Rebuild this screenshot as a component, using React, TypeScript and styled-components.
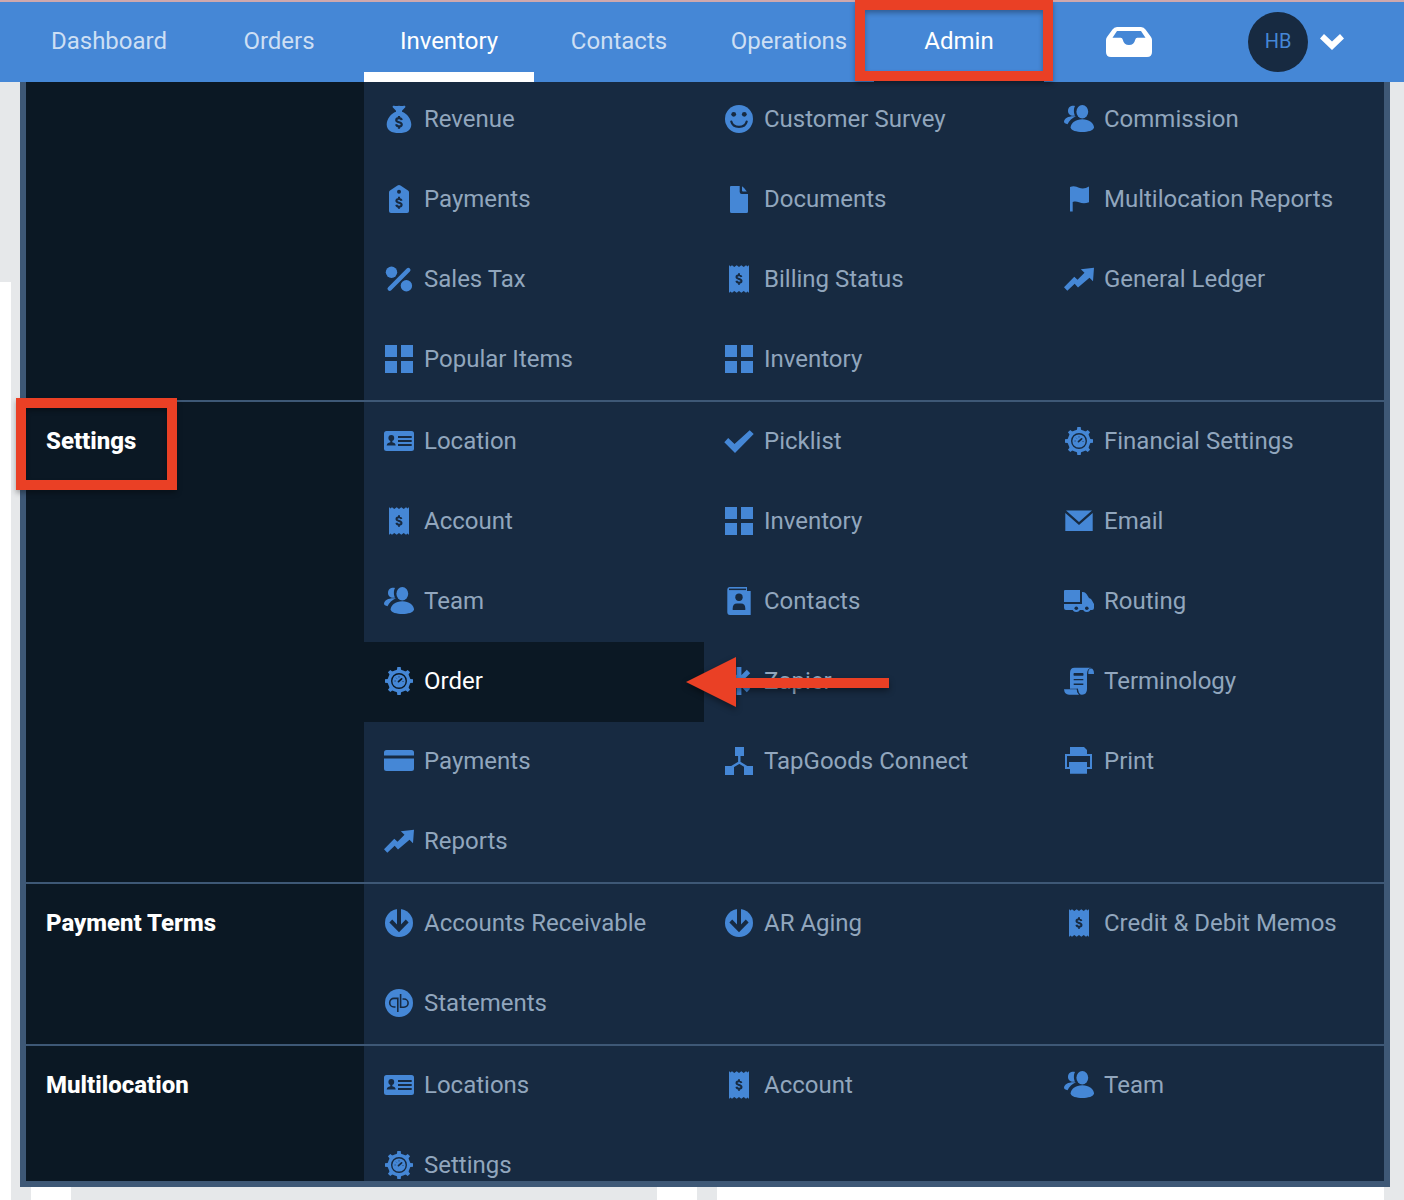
import React from "react";
import styled, { createGlobalStyle, css } from "styled-components";

const color = {
  brand: "#4587d6",
  panel: "#172a41",
  panelDark: "#0b1824",
  line: "#3e5876",
  text: "#91a6bd",
  page: "#e6e8ea",
  accentStrip: "#cfa8ad",
  callout: "#ea4025",
};

const GlobalStyle = createGlobalStyle`
  *, *::before, *::after { box-sizing: border-box; }
  body { margin: 0; background: ${color.page}; }
`;

const Shell = styled.div`
  display: flex;
  flex-direction: column;
  height: 100vh;
  overflow: hidden;
  background: ${color.page};
  font-family: Roboto, "Liberation Sans", sans-serif;
  font-size: 24px;
  line-height: 28px;
`;

/* ---------- header ---------- */

const Header = styled.header`
  position: relative;
  z-index: 2;
  flex: none;
  background: ${color.brand};
  border-top: 2px solid ${color.accentStrip};
`;

const Nav = styled.nav`
  display: grid;
  grid-template-columns: repeat(8, 1fr);
  height: 80px;
  padding: 0 20px 0 24px;
`;

const NavLink = styled.a<{ $bright?: boolean; $bar?: string }>`
  position: relative;
  display: flex;
  align-items: center;
  justify-content: center;
  padding-bottom: 2px;
  color: ${(p) => (p.$bright ? "#fff" : "#cddff4")};
  text-decoration: none;
  ${(p) =>
    p.$bar &&
    css`
      box-shadow: inset 0 -10px 0 ${p.$bar};
    `}
`;

const IconLink = styled(NavLink)`
  padding: 0;
`;

const Profile = styled.button`
  display: flex;
  align-items: center;
  gap: 12px;
  padding: 0 0 0 34px;
  border: 0;
  background: none;
  font: inherit;
  cursor: pointer;
`;

const Avatar = styled.span`
  display: grid;
  place-items: center;
  width: 60px;
  height: 60px;
  padding-bottom: 2px;
  border-radius: 50%;
  background: ${color.panel};
  color: ${color.brand};
  font-size: 20px;
`;

/* ---------- page behind the menu ---------- */

const Body = styled.main`
  position: relative;
  flex: 1;
  min-height: 0;
  display: flex;
  gap: 20px;
  padding: 200px 20px 0 0;
`;

const Card = styled.div<{ $width?: number }>`
  background: #fff;
  ${(p) => (p.$width ? `flex: 0 0 ${p.$width}px;` : "flex: 1;")}
`;

const CardRow = styled.div`
  display: flex;
  justify-content: space-between;
  flex: 0 0 666px;
`;

/* ---------- mega menu ---------- */

const Menu = styled.div`
  position: absolute;
  inset: -2px 14px 13px 20px;
  border: solid ${color.line};
  border-width: 0 6px 6px;
  background: ${color.panel};
`;

const MenuBody = styled.div`
  height: 100%;
  clip-path: inset(0 -20px);
`;

const Section = styled.section`
  display: grid;
  grid-template-columns: 338px 1fr;
  & + & {
    border-top: 2px solid ${color.line};
  }
`;

const SectionLabel = styled.h2`
  position: relative;
  margin: 0;
  padding: 25px 20px;
  background: ${color.panelDark};
  color: #fff;
  font-size: 24px;
  font-weight: 800;
  line-height: 28px;
`;

const Items = styled.ul`
  display: grid;
  grid-template-columns: repeat(3, 1fr);
  grid-auto-rows: 80px;
  margin: 0;
  padding: 0;
  list-style: none;
  background: ${color.panel};
`;

const Cell = styled.li`
  position: relative;
  display: grid;
`;

const Item = styled.a<{ $active?: boolean }>`
  --ground: ${(p) => (p.$active ? color.panelDark : color.panel)};
  display: flex;
  align-items: center;
  gap: 10px;
  padding: 0 20px 2px;
  background: var(--ground);
  color: ${(p) => (p.$active ? "#fff" : color.text)};
  text-decoration: none;
  white-space: nowrap;
`;

const Glyph = styled.svg`
  flex: none;
  width: 30px;
  height: 30px;
  fill: ${color.brand};
  .cut {
    fill: var(--ground);
  }
  .cutline {
    fill: none;
    stroke: var(--ground);
  }
  .line {
    fill: none;
    stroke: ${color.brand};
  }
`;

/* ---------- callouts ---------- */

const calloutBox = css`
  position: absolute;
  z-index: 1;
  border: 10px solid ${color.callout};
  box-shadow: 0 3px 5px rgba(0, 0, 0, 0.3), inset 0 3px 5px rgba(0, 0, 0, 0.3);
  pointer-events: none;
`;

const NavCallout = styled.span`
  ${calloutBox}
  inset: -2px -9px 1px -19px;
`;

const LabelCallout = styled.span`
  ${calloutBox}
  top: -4px;
  left: -10px;
  width: 161px;
  height: 92px;
`;

const Arrow = styled.svg`
  position: absolute;
  z-index: 1;
  top: 15px;
  left: -18px;
  width: 203px;
  height: 50px;
  overflow: visible;
  fill: ${color.callout};
  filter: drop-shadow(0 3px 3px rgba(0, 0, 0, 0.4));
  pointer-events: none;
`;

/* ---------- icons, drawn on a 30 x 30 grid ---------- */

const Dollar = ({ y, s = 1 }: { y: number; s?: number }) => (
  <path
    className="cutline"
    strokeWidth="2.3"
    transform={`translate(15 ${y}) scale(${s})`}
    d="M2.8-2.3C2.5-3.8 1.3-4.3 0-4.3c-1.7 0-2.9.8-2.9 2.1C-2.9.6 2.9-.6 2.9 2.2 2.9 3.5 1.7 4.3 0 4.3c-1.6 0-2.7-.7-3-2.2M0-6.7v2.4M0 4.3v2.4"
  />
);

const gearTeeth = [0, 45, 90, 135, 180, 225, 270, 315];

const icons: Record<string, React.ReactNode> = {
  bag: (
    <>
      <path d="M8.7 3.2c-.4-1.2.4-1.7 1.4-1.4 1.6.5 3 .2 4.9 0 1.9.2 3.3.5 4.9 0 1-.3 1.8.2 1.4 1.4L18 6.7v1.1c5 1.7 9.3 7.2 9.3 12.7 0 6-4.8 8.5-12.3 8.500S2.700 26.500 2.700 20.500C2.700 15 7 9.500 12 7.800V6.700z" />
      <Dollar y={18.3} s={0.95} />
    </>
  ),
  tag: (
    <>
      <path d="M15 1l1.5.6L24 6.5q1 .7 1 1.8V27q0 2-2 2H7q-2 0-2-2V8.3Q5 7.2 6 6.5l7.500-4.900z" />
      <circle className="cut" cx="15" cy="7.7" r="2" />
      <Dollar y={18.8} s={0.9} />
    </>
  ),
  percent: (
    <>
      <circle cx="7.5" cy="8.3" r="5.7" />
      <circle cx="22.4" cy="21.7" r="5.7" />
      <path className="line" strokeWidth="4.4" strokeLinecap="round" d="M5.700 24.700L24.300 6" />
    </>
  ),
  grid: <path d="M1 1h12v12H1zM17 1h12v12H17zM1 17h12v12H1zM17 17h12v12H17z" />,
  smile: (
    <>
      <circle cx="15" cy="15" r="14" />
      <circle className="cut" cx="9.7" cy="10.3" r="2.4" />
      <circle className="cut" cx="20.3" cy="10.3" r="2.4" />
      <path className="cutline" strokeWidth="2.2" strokeLinecap="round" d="M7.3 17.500C9 24.600 21 24.600 22.700 17.500" />
    </>
  ),
  doc: (
    <>
      <path d="M7 2h8.700v6q0 2 2 2H24v17.500q0 1.500-1.500 1.500h-15Q6 29 6 27.500V3q0-1 1-1z" />
      <path d="M18 2.300q2.500 1.500 4.800 5.200H19q-1 0-1-1z" />
    </>
  ),
  receipt: (
    <>
      <path d="M5 1l1.300 1.500L8 1.200l2.300 1.800 2.400-1.800L15 3l2.300-1.800L19.700 3 22 1.200l1.700 1.300L25 1v28l-1.300-1.500L22 28.800 19.700 27l-2.400 1.800L15 27l-2.300 1.800L10.300 27 8 28.800l-1.700-1.300L5 29z" />
      <Dollar y={15} s={0.86} />
    </>
  ),
  users: (
    <>
      <path d="M11 1.900C9.600 4 9.500 9 11 11.500 7.500 12.600 4 10.500 4 6.900 4 3.200 7 1.200 11 1.900z" />
      <path d="M3.500 20.300L.9 19.300Q0 18.800 0 17.500C.4 14 5 11.600 12 12.300 8 14 5.200 16.500 3.500 20.300z" />
      <ellipse cx="18.3" cy="7.7" rx="5.9" ry="6.8" />
      <path d="M18.300 15.300c6.700 0 11.700 4.200 11.700 8.200C29.500 26.500 24 28 18.300 28S7 26.500 6.600 23.500c0-4 5-8.200 11.700-8.200z" />
    </>
  ),
  flag: <path d="M6 3c4-1.500 6.500-.3 9 .8 3 1.200 6.500 1 10-1.200v15.600c-4 1.700-7 1.200-10 .1-2.500-.9-4-.9-6.300-.3v9.500H6z" />,
  trend: <path d="M0 23.300L10.300 12.700l3.200 3 7-7-3.700-3.500L30 3.700l-1 13.600-3.500-3.600L14 23.500l-3.300-3.700-7.400 7z" />,
  idCard: (
    <>
      <rect y="5" width="30" height="20" rx="2.5" />
      <circle className="cut" cx="7.3" cy="12" r="2.9" />
      <path className="cut" d="M6.300 14h2v2.200q3.100.6 3.400 3.300h-9q.3-2.700 3.600-3.300z" />
      <path className="cutline" strokeWidth="1.8" d="M14 11h13.700M14 15h13.700M14 19h13.700" />
    </>
  ),
  gear: (
    <>
      <circle cx="15" cy="15" r="11.3" />
      {gearTeeth.map((a) => (
        <path key={a} transform={`rotate(${a} 15 15)`} d="M11.500 5l1.500-1.500.3-2.500h3.400l.3 2.500L18.500 5z" />
      ))}
      <circle className="cutline" cx="15" cy="15" r="7.3" strokeWidth="1.4" />
      <path className="cutline" strokeWidth="1.7" strokeLinecap="round" d="M14.500 15.600L17.600 12.800" />
      <path className="cutline" strokeWidth=".7" d="M10.500 15h1.200M15 10.300v1.200M18.500 15.500h1M12 11.800l.6.600" />
    </>
  ),
  card: <path d="M2.500 4h25Q30 4 30 6.500V9.500H0v-3Q0 4 2.500 4zM0 12.500h30v10q0 2.500-2.500 2.500h-25Q0 25 0 22.500z" />,
  check: <path d="M.3 16.300L4.200 12l6.300 6L25.700 4.300l4 3.700L11 27z" />,
  contact: (
    <>
      <path d="M5.500 1H23v4h3.700v24H6q-2.700 0-2.700-3V3.500Q3.300 1 5.500 1z" />
      <path className="cut" d="M5 2.600h17v1.500H5z" />
      <circle className="cut" cx="15" cy="11.3" r="3.7" />
      <path className="cut" d="M8.700 24v-1.500q0-5 4.300-5h4q4.300 0 4.300 5V24z" />
    </>
  ),
  asterisk: <path className="line" strokeWidth="4.8" d="M15 1v28M1 15h28M5.500 5.500l19 19M5.500 24.500l19-19" />,
  network: (
    <>
      <path d="M11 1h9v9h-9zM1 20h9v9H1zM20 20h9v9h-9z" />
      <path className="line" strokeWidth="2.4" d="M15.300 9v7.500L7 21.500M15.300 16.500L23.500 21.500" />
    </>
  ),
  mail: <path d="M2 4.500h26L15 16zM1.300 7l13.700 12L28.700 7v18H1.300z" />,
  truck: (
    <>
      <path d="M1 4h15v12H0V5q0-1 1-1zM18 6h1q2 0 3.500 2l2.500 4q2.500.5 3 2.500L30 18v4q0 2-2 2H2q-2 0-2-2v-4h18z" />
      <circle cx="12.3" cy="22.3" r="3.8" />
      <circle cx="22.8" cy="22.3" r="3.8" />
      <circle className="cut" cx="12.3" cy="22.3" r="1.8" />
      <circle className="cut" cx="22.8" cy="22.3" r="1.8" />
    </>
  ),
  scroll: (
    <>
      <path d="M10.500 1.700H27q-4 1-4 6.300v15q0 5.700-5 5.700-4 0-4-6H6V7q0-5.300 4.500-5.300z" />
      <path d="M24.300 8q-.3-5.500 2.700-5.500T30 8zM0 23.300h12.700q0 3.700 2.300 5.400H5Q.5 28.700 0 23.300z" />
      <path className="cutline" strokeWidth=".8" d="M13.300 22.700q.2 4.300 2.700 6" />
      <path className="cutline" strokeWidth="1.4" d="M9.700 9h9.600M9.700 13.600h9.600M9.700 18.300h9.600" />
      <path className="cut" d="M9.700 7h9.600v2H9.700z" />
    </>
  ),
  printer: (
    <>
      <path d="M6 1h14l3 3v5H6z" />
      <path className="line" strokeWidth="2" d="M2 9h25v13H2z" />
      <path d="M5 16h18v11.700H6V23H5z" />
    </>
  ),
  down: (
    <>
      <circle cx="15" cy="15" r="14" />
      <path className="cutline" strokeWidth="4" d="M15 0v20M6.800 13l8.200 8.300L23.200 13" />
    </>
  ),
  statement: (
    <>
      <circle cx="15" cy="15" r="14" />
      <path className="cutline" strokeWidth="1.6" d="M11.500 19H10a4.300 4.300 0 0 1 0-8.600h3.800V24M18.500 11H20a4.100 4.100 0 0 1 0 8.200h-3.400V6" />
    </>
  ),
};

/* ---------- data ---------- */

type Entry = { icon: string; text: string; active?: boolean; arrow?: boolean };
type Group = { title: string; callout?: boolean; items: Entry[] };

const e = (icon: string, text: string, extra: Partial<Entry> = {}): Entry => ({ icon, text, ...extra });

const groups: Group[] = [
  {
    title: "",
    items: [
      e("bag", "Revenue"), e("smile", "Customer Survey"), e("users", "Commission"),
      e("tag", "Payments"), e("doc", "Documents"), e("flag", "Multilocation Reports"),
      e("percent", "Sales Tax"), e("receipt", "Billing Status"), e("trend", "General Ledger"),
      e("grid", "Popular Items"), e("grid", "Inventory"),
    ],
  },
  {
    title: "Settings",
    callout: true,
    items: [
      e("idCard", "Location"), e("check", "Picklist"), e("gear", "Financial Settings"),
      e("receipt", "Account"), e("grid", "Inventory"), e("mail", "Email"),
      e("users", "Team"), e("contact", "Contacts"), e("truck", "Routing"),
      e("gear", "Order", { active: true }), e("asterisk", "Zapier", { arrow: true }), e("scroll", "Terminology"),
      e("card", "Payments"), e("network", "TapGoods Connect"), e("printer", "Print"),
      e("trend", "Reports"),
    ],
  },
  {
    title: "Payment Terms",
    items: [
      e("down", "Accounts Receivable"), e("down", "AR Aging"), e("receipt", "Credit & Debit Memos"),
      e("statement", "Statements"),
    ],
  },
  {
    title: "Multilocation",
    items: [
      e("idCard", "Locations"), e("receipt", "Account"), e("users", "Team"),
      e("gear", "Settings"),
    ],
  },
];

export default function App() {
  return (
    <Shell>
      <GlobalStyle />
      <Header>
        <Nav>
          <NavLink href="#dashboard">Dashboard</NavLink>
          <NavLink href="#orders">Orders</NavLink>
          <NavLink href="#inventory" $bright $bar="#fff">Inventory</NavLink>
          <NavLink href="#contacts">Contacts</NavLink>
          <NavLink href="#operations">Operations</NavLink>
          <NavLink href="#admin" $bright $bar={color.panel}>
            Admin
            <NavCallout />
          </NavLink>
          <IconLink href="#inbox" aria-label="Inbox">
            <svg width="46" height="30" viewBox="0 0 46 30" fill="#fff" fillRule="evenodd">
              <path d="M11 0h24q3 0 4.500 2.500L45 10q1 1.500 1 3v12q0 5-5 5H5q-5 0-5-5V13q0-1.500 1-3L6.500 2.500Q8 0 11 0zM11 4L6.500 10.700h8.300q1.500 0 2 2 1.200 5.300 6.200 5.300t6.200-5.300q.5-2 2-2h8.300L35 4z" />
            </svg>
          </IconLink>
          <Profile type="button">
            <Avatar>HB</Avatar>
            <svg width="24" height="16" viewBox="0 0 24 16" fill="#fff">
              <path d="M4 0l8 7.500L20 0l4 4.500L12 16 0 4.500z" />
            </svg>
          </Profile>
        </Nav>
      </Header>
      <Body>
        <Card $width={11} />
        <CardRow>
          <Card $width={40} />
          <Card $width={40} />
        </CardRow>
        <Card />
        <Menu>
          <MenuBody>
            {groups.map((group) => (
              <Section key={group.title}>
                <SectionLabel>
                  {group.title}
                  {group.callout && <LabelCallout />}
                </SectionLabel>
                <Items>
                  {group.items.map((item) => (
                    <Cell key={item.text}>
                      <Item href="#" $active={item.active}>
                        <Glyph viewBox="0 0 30 30" aria-hidden="true">{icons[item.icon]}</Glyph>
                        {item.text}
                      </Item>
                      {item.arrow && (
                        <Arrow viewBox="0 0 203 50" aria-hidden="true">
                          <path d="M0 25L50 0v21h153v10H50v19z" />
                        </Arrow>
                      )}
                    </Cell>
                  ))}
                </Items>
              </Section>
            ))}
          </MenuBody>
        </Menu>
      </Body>
    </Shell>
  );
}
